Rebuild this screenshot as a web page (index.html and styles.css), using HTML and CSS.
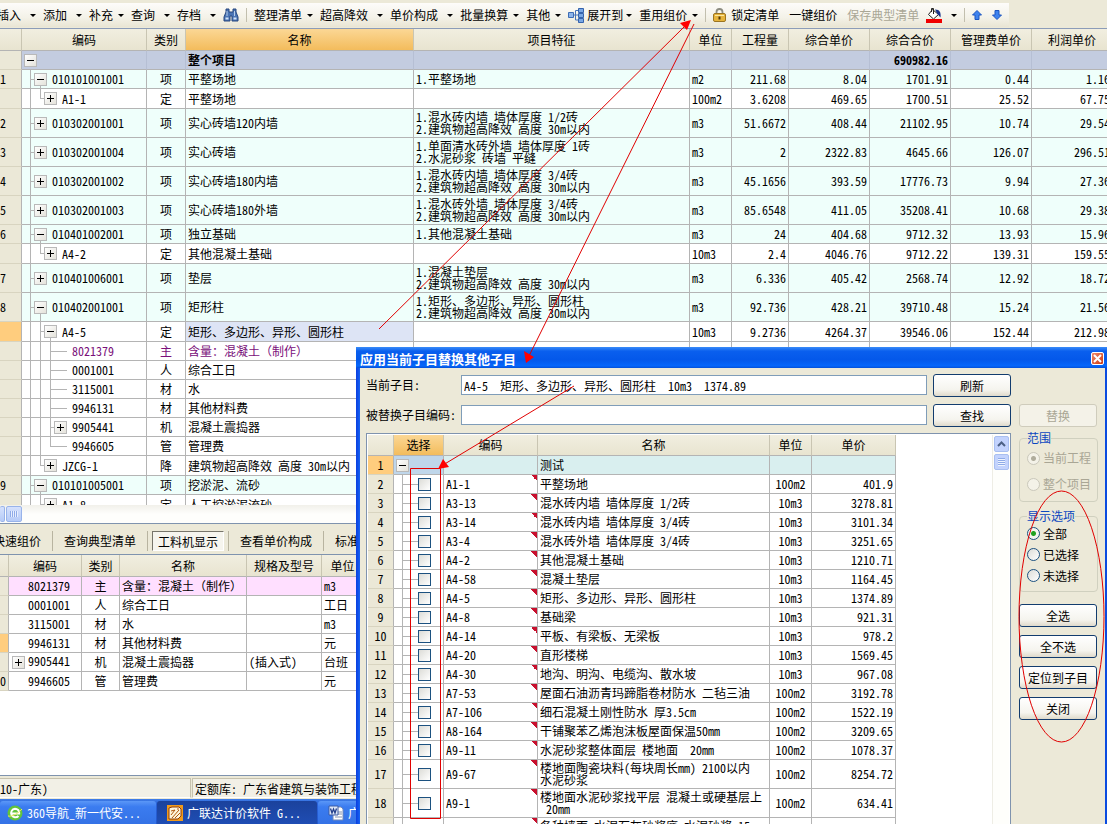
FILE: index.html
```html
<!DOCTYPE html>
<html lang="zh-CN">
<head>
<meta charset="utf-8">
<title>广联达计价软件</title>
<link rel="stylesheet" href="styles.css">
</head>
<body>
<main class="app">
  <nav class="toolbar">
    <div class="strip">
      <button class="tool wide">插入</button>
      <button class="tool wide">添加</button>
      <button class="tool">补充</button>
      <button class="tool wide">查询</button>
      <button class="tool wide">存档</button>
      <button class="plain" aria-label="查找"><svg width="16" height="16" viewBox="0 0 16 16"><path d="M3 2h3v3h4V2h3v3l2 5v4H9V9H7v5H1v-4l2-5z" fill="#4a74b4" stroke="#26477e"/><path d="M2.500 10.500h3v2h-3zM10.500 10.500h3v2h-3z" fill="#d3e4f8"/><path d="M4 4v5M11.500 4v5" stroke="#b5cdea"/></svg></button>
      <span class="sep"></span>
      <button class="tool">整理清单</button>
      <button class="tool wide">超高降效</button>
      <button class="tool wide">单价构成</button>
      <button class="tool">批量换算</button>
      <button class="tool">其他</button>
      <button class="tool icon"><svg width="16" height="15" viewBox="0 0 16 15"><path d="M5 7h5M7.500 7V2.500H10M7.500 7v5H10" fill="none" stroke="#4774b8"/><path d="M.5 4.500h5v5h-5z" fill="#8db4ea" stroke="#3d6cb4"/><path d="M10.500.5h5v4h-5zM10.500 5.500h5v4h-5zM10.500 10.500h5v4h-5z" fill="#79a7e4" stroke="#3563ad"/></svg>展开到</button>
      <button class="tool">重用组价</button>
      <span class="sep"></span>
      <button class="plain label"><svg width="13" height="14" viewBox="0 0 13 14"><path d="M3.500 7V4a3 3 0 0 1 6 0v3" fill="none" stroke="#8c8c80" stroke-width="1.800"/><rect x=".5" y="5.500" width="12" height="8" rx="1.500" fill="#e6b43c" stroke="#9b7420"/><path d="M2 7.500h9" stroke="#fbe7a0"/><path d="M6.500 8.500v3" stroke="#503808" stroke-width="2"/></svg>锁定清单</button>
      <button class="plain label">一键组价</button>
      <button class="plain" disabled>保存典型清单</button>
      <button class="tool wide" aria-label="填充颜色"><svg width="16" height="16" viewBox="0 0 16 16"><path d="M6.500 2.500l6 5-5 4.500-5-4.500z" fill="#fff" stroke="#222"/><path d="M5.500 5V1.500h2V7" fill="none" stroke="#222"/><path d="M9 2.500c5 0 6 3 5.500 8L11.500 7z" fill="#17338c"/><path d="M0 12h16v4H0z" fill="#f00000"/></svg></button>
      <span class="sep"></span>
      <button class="plain label" aria-label="上移"><svg width="10" height="10" viewBox="0 0 10 10"><path d="M5 .5L9.500 5H7v4.500H3V5H.5z" fill="#3f83ee" stroke="#1c55c0"/></svg></button>
      <button class="plain" aria-label="下移"><svg width="10" height="10" viewBox="0 0 10 10"><path d="M5 9.500L.5 5H3V.5h4V5h2.500z" fill="#3f83ee" stroke="#1c55c0"/></svg></button>
    </div>
  </nav>

  <section class="pane main-pane">
    <table class="grid main-grid">
      <colgroup><col class="w22"><col class="w125"><col class="w39"><col class="w228"><col class="w276"><col class="w42"><col class="w57"><col class="w81"><col class="w81"><col class="w81"><col class="w81"></colgroup>
      <thead><tr><th></th><th>编码</th><th>类别</th><th class="hot">名称</th><th>项目特征</th><th>单位</th><th>工程量</th><th>综合单价</th><th>综合合价</th><th>管理费单价</th><th>利润单价</th></tr></thead>
      <tbody>
        <tr class="total"><th></th><td class="code"><div class="tree"><span class="knot"><button class="tg minus" aria-label="折叠"></button></span></div></td><td></td><td>整个项目</td><td></td><td></td><td></td><td></td><td class="n">690982.16</td><td></td><td></td></tr>
        <tr class="item"><th>1</th><td class="code"><div class="tree"><i class="g t"></i><span class="knot open"><button class="tg minus" aria-label="折叠"></button></span>010101001001</div></td><td class="c">项</td><td>平整场地</td><td>1.平整场地</td><td>m2</td><td class="n">211.68</td><td class="n">8.04</td><td class="n">1701.91</td><td class="n">0.44</td><td class="n">1.16</td></tr>
        <tr class="mid"><th></th><td class="code"><div class="tree"><i class="g"></i><i class="g e"></i><span class="knot"><button class="tg plus" aria-label="展开"></button></span>A1-1</div></td><td class="c">定</td><td>平整场地</td><td></td><td>100m2</td><td class="n">3.6208</td><td class="n">469.65</td><td class="n">1700.51</td><td class="n">25.52</td><td class="n">67.75</td></tr>
        <tr class="item tall"><th>2</th><td class="code"><div class="tree"><i class="g t"></i><span class="knot"><button class="tg plus" aria-label="展开"></button></span>010302001001</div></td><td class="c">项</td><td>实心砖墙120内墙</td><td>1.混水砖内墙 墙体厚度 1/2砖<br>2.建筑物超高降效 高度 30m以内</td><td>m3</td><td class="n">51.6672</td><td class="n">408.44</td><td class="n">21102.95</td><td class="n">10.74</td><td class="n">29.54</td></tr>
        <tr class="item tall"><th>3</th><td class="code"><div class="tree"><i class="g t"></i><span class="knot"><button class="tg plus" aria-label="展开"></button></span>010302001004</div></td><td class="c">项</td><td>实心砖墙</td><td>1.单面清水砖外墙 墙体厚度 1砖<br>2.水泥砂浆 砖墙 平缝</td><td>m3</td><td class="n">2</td><td class="n">2322.83</td><td class="n">4645.66</td><td class="n">126.07</td><td class="n">296.51</td></tr>
        <tr class="item tall"><th>4</th><td class="code"><div class="tree"><i class="g t"></i><span class="knot"><button class="tg plus" aria-label="展开"></button></span>010302001002</div></td><td class="c">项</td><td>实心砖墙180内墙</td><td>1.混水砖内墙 墙体厚度 3/4砖<br>2.建筑物超高降效 高度 30m以内</td><td>m3</td><td class="n">45.1656</td><td class="n">393.59</td><td class="n">17776.73</td><td class="n">9.94</td><td class="n">27.36</td></tr>
        <tr class="item tall"><th>5</th><td class="code"><div class="tree"><i class="g t"></i><span class="knot"><button class="tg plus" aria-label="展开"></button></span>010302001003</div></td><td class="c">项</td><td>实心砖墙180外墙</td><td>1.混水砖外墙 墙体厚度 3/4砖<br>2.建筑物超高降效 高度 30m以内</td><td>m3</td><td class="n">85.6548</td><td class="n">411.05</td><td class="n">35208.41</td><td class="n">10.68</td><td class="n">29.38</td></tr>
        <tr class="item"><th>6</th><td class="code"><div class="tree"><i class="g t"></i><span class="knot open"><button class="tg minus" aria-label="折叠"></button></span>010401002001</div></td><td class="c">项</td><td>独立基础</td><td>1.其他混凝土基础</td><td>m3</td><td class="n">24</td><td class="n">404.68</td><td class="n">9712.32</td><td class="n">13.93</td><td class="n">15.96</td></tr>
        <tr class="mid"><th></th><td class="code"><div class="tree"><i class="g"></i><i class="g e"></i><span class="knot"><button class="tg plus" aria-label="展开"></button></span>A4-2</div></td><td class="c">定</td><td>其他混凝土基础</td><td></td><td>10m3</td><td class="n">2.4</td><td class="n">4046.76</td><td class="n">9712.22</td><td class="n">139.31</td><td class="n">159.55</td></tr>
        <tr class="item tall"><th>7</th><td class="code"><div class="tree"><i class="g t"></i><span class="knot"><button class="tg plus" aria-label="展开"></button></span>010401006001</div></td><td class="c">项</td><td>垫层</td><td>1.混凝土垫层<br>2.建筑物超高降效 高度 30m以内</td><td>m3</td><td class="n">6.336</td><td class="n">405.42</td><td class="n">2568.74</td><td class="n">12.92</td><td class="n">18.72</td></tr>
        <tr class="item tall"><th>8</th><td class="code"><div class="tree"><i class="g t"></i><span class="knot open"><button class="tg minus" aria-label="折叠"></button></span>010402001001</div></td><td class="c">项</td><td>矩形柱</td><td>1.矩形、多边形、异形、圆形柱<br>2.建筑物超高降效 高度 30m以内</td><td>m3</td><td class="n">92.736</td><td class="n">428.21</td><td class="n">39710.48</td><td class="n">15.24</td><td class="n">21.56</td></tr>
        <tr class="mid"><th class="hot"></th><td class="code"><div class="tree"><i class="g"></i><i class="g t"></i><span class="knot open"><button class="tg minus" aria-label="折叠"></button></span>A4-5</div></td><td class="c">定</td><td class="picked">矩形、多边形、异形、圆形柱</td><td></td><td>10m3</td><td class="n">9.2736</td><td class="n">4264.37</td><td class="n">39546.06</td><td class="n">152.44</td><td class="n">212.98</td></tr>
        <tr class="purple"><th></th><td class="code"><div class="tree"><i class="g"></i><i class="g"></i><i class="g t"></i><i class="dash"></i>8021379</div></td><td class="c">主</td><td class="full">含量：混凝土（制作）</td><td></td><td></td><td></td><td></td><td></td><td></td><td></td></tr>
        <tr><th></th><td class="code"><div class="tree"><i class="g"></i><i class="g"></i><i class="g t"></i><i class="dash"></i>0001001</div></td><td class="c">人</td><td>综合工日</td><td></td><td></td><td></td><td></td><td></td><td></td><td></td></tr>
        <tr><th></th><td class="code"><div class="tree"><i class="g"></i><i class="g"></i><i class="g t"></i><i class="dash"></i>3115001</div></td><td class="c">材</td><td>水</td><td></td><td></td><td></td><td></td><td></td><td></td><td></td></tr>
        <tr><th></th><td class="code"><div class="tree"><i class="g"></i><i class="g"></i><i class="g t"></i><i class="dash"></i>9946131</div></td><td class="c">材</td><td>其他材料费</td><td></td><td></td><td></td><td></td><td></td><td></td><td></td></tr>
        <tr><th></th><td class="code"><div class="tree"><i class="g"></i><i class="g"></i><i class="g t"></i><span class="knot"><button class="tg plus" aria-label="展开"></button></span>9905441</div></td><td class="c">机</td><td>混凝土震捣器</td><td></td><td></td><td></td><td></td><td></td><td></td><td></td></tr>
        <tr><th></th><td class="code"><div class="tree"><i class="g"></i><i class="g"></i><i class="g e"></i><i class="dash"></i>9946605</div></td><td class="c">管</td><td>管理费</td><td></td><td></td><td></td><td></td><td></td><td></td><td></td></tr>
        <tr class="mid"><th></th><td class="code"><div class="tree"><i class="g"></i><i class="g e"></i><span class="knot"><button class="tg plus" aria-label="展开"></button></span>JZCG-1</div></td><td class="c">降</td><td>建筑物超高降效 高度 30m以内</td><td></td><td></td><td></td><td></td><td></td><td></td><td></td></tr>
        <tr class="item"><th>9</th><td class="code"><div class="tree"><i class="g t"></i><span class="knot open"><button class="tg minus" aria-label="折叠"></button></span>010101005001</div></td><td class="c">项</td><td>挖淤泥、流砂</td><td></td><td></td><td></td><td></td><td></td><td></td><td></td></tr>
        <tr class="mid"><th></th><td class="code"><div class="tree"><i class="g"></i><i class="g e"></i><span class="knot"><button class="tg plus" aria-label="展开"></button></span>A1-8</div></td><td class="c">定</td><td>人工挖淤泥流砂</td><td></td><td></td><td></td><td></td><td></td><td></td><td></td></tr>
      </tbody>
    </table>
  </section>

  <div class="hscroll"><span class="cap"></span><span class="thumb"></span></div>

  <nav class="tabs">
    <button>快速组价</button><button>查询典型清单</button><button class="on"><span>工料机显示</span></button><button>查看单价构成</button><button>标准换算</button>
  </nav>

  <section class="pane sub-pane">
    <table class="grid sub-grid">
      <colgroup><col class="w9"><col class="w73"><col class="w38"><col class="w127"><col class="w75"><col class="w42"></colgroup>
      <thead><tr><th></th><th>编码</th><th>类别</th><th>名称</th><th>规格及型号</th><th>单位</th></tr></thead>
      <tbody>
        <tr class="pink"><th></th><td class="id">8021379</td><td class="c">主</td><td class="full">含量：混凝土（制作）</td><td></td><td>m3</td></tr>
        <tr><th></th><td class="id">0001001</td><td class="c">人</td><td>综合工日</td><td></td><td>工日</td></tr>
        <tr><th></th><td class="id">3115001</td><td class="c">材</td><td>水</td><td></td><td>m3</td></tr>
        <tr><th class="hot"></th><td class="id">9946131</td><td class="c">材</td><td>其他材料费</td><td></td><td>元</td></tr>
        <tr><th></th><td class="id has"><button class="tg plus" aria-label="展开"></button>9905441</td><td class="c">机</td><td>混凝土震捣器</td><td>(插入式)</td><td>台班</td></tr>
        <tr><th>0</th><td class="id">9946605</td><td class="c">管</td><td>管理费</td><td></td><td>元</td></tr>
      </tbody>
    </table>
  </section>

  <footer class="status"><span class="first">10-广东)</span><span>定额库: 广东省建筑与装饰工程综合定额(2010)</span></footer>

  <nav class="taskbar">
    <button><svg width="16" height="16" viewBox="0 0 16 16"><circle cx="8" cy="8" r="7.500" fill="#62c33c"/><path d="M4 8.500h8.200c.3-3-1.800-4.800-4.200-4.800A4.300 4.300 0 1 0 11.500 11" fill="none" stroke="#fff" stroke-width="2"/><path d="M1 11C5 12 12 8 15 4" stroke="#f7e96a" fill="none"/></svg>360导航_新一代安...</button>
    <button class="on"><svg width="16" height="16" viewBox="0 0 16 16"><path d="M0 0h16v16H0z" fill="#f09a1c"/><path d="M2 3l3-1h7l2 2v7l-3 3H2z" fill="#fff6dc" stroke="#8c3d0c"/><path d="M4 6l4-1-4 5M5 13l7-8M8 13l5-5M10 4h2" stroke="#b0580f" fill="none"/></svg>广联达计价软件 G...</button>
    <button><svg width="16" height="16" viewBox="0 0 16 16"><path d="M5 2h8l2 2v11H5z" fill="#fff" stroke="#7088b8"/><path d="M10 7h4M10 9h4M7 12h7" stroke="#8090b0"/><path d="M1 1h9v9H1z" fill="#dfe8f8" stroke="#3b5aa4"/><path d="M2.500 3.500L4 8l1.500-4L7 8l1.500-4.500" fill="none" stroke="#24408c" stroke-width="1.300"/></svg>广联达</button>
  </nav>

  <section class="dialog" role="dialog" aria-labelledby="dlg-title">
    <header class="titlebar"><h1 id="dlg-title">应用当前子目替换其他子目</h1><button class="close" aria-label="关闭窗口"><svg width="11" height="11" viewBox="0 0 11 11"><path d="M2 2l7 7M9 2l-7 7" stroke="#fff" stroke-width="2"/></svg></button></header>
    <div class="body">
      <div class="left">
        <div class="field"><label for="cur">当前子目:</label><input id="cur" type="text" value="A4-5  矩形、多边形、异形、圆形柱  10m3  1374.89"><button class="btn">刷新</button></div>
        <div class="field"><label for="rep">被替换子目编码:</label><input id="rep" type="text"><button class="btn">查找</button></div>
        <div class="list">
          <div class="list-view">
          <table class="grid pick-grid">
            <colgroup><col class="w26"><col class="w50"><col class="w94"><col class="w232"><col class="w42"><col class="w84"></colgroup>
            <thead><tr><th></th><th class="hot">选择</th><th>编码</th><th>名称</th><th>单位</th><th>单价</th></tr></thead>
            <tbody>
              <tr class="group"><th class="hot">1</th><td class="sel"><button class="tg minus" aria-label="折叠"></button></td><td></td><td>测试</td><td></td><td></td></tr>
              <tr><th>2</th><td class="chk"><input type="checkbox" aria-label="A1-1"></td><td class="mark">A1-1</td><td>平整场地</td><td class="c">100m2</td><td class="n">401.9</td></tr>
              <tr><th>3</th><td class="chk"><input type="checkbox" aria-label="A3-13"></td><td class="mark">A3-13</td><td>混水砖内墙 墙体厚度 1/2砖</td><td class="c">10m3</td><td class="n">3278.81</td></tr>
              <tr><th>4</th><td class="chk"><input type="checkbox" aria-label="A3-14"></td><td class="mark">A3-14</td><td>混水砖内墙 墙体厚度 3/4砖</td><td class="c">10m3</td><td class="n">3101.34</td></tr>
              <tr><th>5</th><td class="chk"><input type="checkbox" aria-label="A3-4"></td><td class="mark">A3-4</td><td>混水砖外墙 墙体厚度 3/4砖</td><td class="c">10m3</td><td class="n">3251.65</td></tr>
              <tr><th>6</th><td class="chk"><input type="checkbox" aria-label="A4-2"></td><td class="mark">A4-2</td><td>其他混凝土基础</td><td class="c">10m3</td><td class="n">1210.71</td></tr>
              <tr><th>7</th><td class="chk"><input type="checkbox" aria-label="A4-58"></td><td class="mark">A4-58</td><td>混凝土垫层</td><td class="c">10m3</td><td class="n">1164.45</td></tr>
              <tr><th>8</th><td class="chk"><input type="checkbox" aria-label="A4-5"></td><td class="mark">A4-5</td><td>矩形、多边形、异形、圆形柱</td><td class="c">10m3</td><td class="n">1374.89</td></tr>
              <tr><th>9</th><td class="chk"><input type="checkbox" aria-label="A4-8"></td><td class="mark">A4-8</td><td>基础梁</td><td class="c">10m3</td><td class="n">921.31</td></tr>
              <tr><th>10</th><td class="chk"><input type="checkbox" aria-label="A4-14"></td><td class="mark">A4-14</td><td>平板、有梁板、无梁板</td><td class="c">10m3</td><td class="n">978.2</td></tr>
              <tr><th>11</th><td class="chk"><input type="checkbox" aria-label="A4-20"></td><td class="mark">A4-20</td><td>直形楼梯</td><td class="c">10m3</td><td class="n">1569.45</td></tr>
              <tr><th>12</th><td class="chk"><input type="checkbox" aria-label="A4-30"></td><td class="mark">A4-30</td><td>地沟、明沟、电缆沟、散水坡</td><td class="c">10m3</td><td class="n">967.08</td></tr>
              <tr><th>13</th><td class="chk"><input type="checkbox" aria-label="A7-53"></td><td class="mark">A7-53</td><td>屋面石油沥青玛蹄脂卷材防水 二毡三油</td><td class="c">100m2</td><td class="n">3192.78</td></tr>
              <tr><th>14</th><td class="chk"><input type="checkbox" aria-label="A7-106"></td><td class="mark">A7-106</td><td>细石混凝土刚性防水 厚3.5cm</td><td class="c">100m2</td><td class="n">1522.19</td></tr>
              <tr><th>15</th><td class="chk"><input type="checkbox" aria-label="A8-164"></td><td class="mark">A8-164</td><td>干铺聚苯乙烯泡沫板屋面保温50mm</td><td class="c">100m2</td><td class="n">3209.65</td></tr>
              <tr><th>16</th><td class="chk"><input type="checkbox" aria-label="A9-11"></td><td class="mark">A9-11</td><td>水泥砂浆整体面层 楼地面&nbsp; 20mm</td><td class="c">100m2</td><td class="n">1078.37</td></tr>
              <tr class="tall"><th>17</th><td class="chk"><input type="checkbox" aria-label="A9-67"></td><td class="mark">A9-67</td><td>楼地面陶瓷块料(每块周长mm) 2100以内<br>水泥砂浆</td><td class="c">100m2</td><td class="n">8254.72</td></tr>
              <tr class="tall"><th>18</th><td class="chk"><input type="checkbox" aria-label="A9-1"></td><td class="mark">A9-1</td><td>楼地面水泥砂浆找平层 混凝土或硬基层上<br>&nbsp;20mm</td><td class="c">100m2</td><td class="n">634.41</td></tr>
              <tr class="tall"><th>19</th><td class="chk"><input type="checkbox" aria-label="A10-1"></td><td class="mark">A10-1</td><td>各种墙面 水泥石灰砂浆底 水泥砂浆 15<br>+5mm</td><td class="c">100m2</td><td class="n">1013.52</td></tr>
            </tbody>
          </table>
          </div>
          <div class="vscroll">
            <span class="arrow"><svg width="9" height="6" viewBox="0 0 9 6"><path d="M1 5l3.500-3.500L8 5" fill="none" stroke="#4d6185" stroke-width="2"/></svg></span>
            <span class="thumb"></span>
          </div>
        </div>
      </div>
      <aside class="side">
        <button class="btn" disabled>替换</button>
        <fieldset class="scope" disabled><legend>范围</legend>
          <label><input type="radio" name="scope" checked>当前工程</label>
          <label><input type="radio" name="scope">整个项目</label>
        </fieldset>
        <fieldset class="show"><legend>显示选项</legend>
          <label><input type="radio" name="show" checked>全部</label>
          <label><input type="radio" name="show">已选择</label>
          <label><input type="radio" name="show">未选择</label>
        </fieldset>
        <div class="actions">
          <button class="btn">全选</button>
          <button class="btn">全不选</button>
          <button class="btn">定位到子目</button>
          <button class="btn">关闭</button>
        </div>
      </aside>
    </div>
  </section>

  <svg class="notes" width="1107" height="824" viewBox="0 0 1107 824" aria-hidden="true">
    <g fill="none" stroke="#e00000">
      <path d="M379 329L686 25M694 24L529 356M574 386L443 465"/>
      <path d="M410.500 468.500h30v350h-30z"/>
      <ellipse cx="1061.500" cy="616.500" rx="42.500" ry="125.500"/>
    </g>
    <path d="M691 20l-11 3 7 7zM526 363l-2-12 10 6zM438 469l5-10 6 8z" fill="#f00"/>
  </svg>
</main>
</body>
</html>
```
FILE: styles.css
```css
* { box-sizing: border-box; }

html, body { margin: 0; height: 100%; }

body, button, input {
  font-family: "Noto Sans CJK SC", sans-serif;
  font-size: 12px;
  line-height: 12px;
  font-feature-settings: "hwid";
  color: #000;
}

body { overflow: hidden; background: #ece9d8; }

button { margin: 0; padding: 0; border: 0; background: none; white-space: nowrap; }

svg { display: block; flex: none; }

.app {
  position: relative;
  display: flex;
  flex-direction: column;
  height: 100vh;
  overflow: hidden;
}

/* toolbar */
.toolbar {
  flex: none;
  height: 29px;
  padding-top: 3px;
  border-bottom: 1px solid #8c9cb8;
  background: #ece9d8;
}

.strip {
  display: flex;
  align-items: center;
  gap: 7px;
  width: 1012px;
  height: 24px;
  margin-left: -3px;
  background: linear-gradient(#fdfcfa, #f4f2e8 60%, #e9e5d4);
}

.tool, .plain { display: flex; align-items: center; gap: 5px; flex: none; }
.tool::after {
  content: "";
  border: 3px solid transparent;
  border-top-color: #000;
  border-bottom: 0;
}
.tool.wide { gap: 9px; }
.tool.icon { gap: 3px; }
.plain.label { padding-right: 3px; }
.plain:disabled { color: #a9a695; }
.sep { width: 1px; height: 14px; background: #c2bfae; flex: none; }

/* grids */
.pane { min-height: 0; overflow: hidden; background: #fff; }
.main-pane { flex: 13 1 0; }
.sub-pane { flex: 6 1 0; border-bottom: 1px solid #7f93ae; }

.grid { table-layout: fixed; border-collapse: separate; border-spacing: 0; }
.main-grid { width: 100%; min-width: 1113px; }
.sub-grid { width: 364px; }
.pick-grid { width: 528px; }

.w9 { width: 9px; } .w22 { width: 22px; } .w26 { width: 26px; } .w38 { width: 38px; }
.w39 { width: 39px; } .w42 { width: 42px; } .w50 { width: 50px; } .w57 { width: 57px; }
.w73 { width: 73px; } .w75 { width: 75px; } .w81 { width: 81px; } .w84 { width: 84px; }
.w94 { width: 94px; } .w125 { width: 125px; } .w127 { width: 127px; }
.w228 { width: 228px; } .w232 { width: 232px; } .w276 { width: 276px; }

.grid tr { height: 19px; background: #fff; }
.grid thead tr { height: 22px; }
.pick-grid thead tr { height: 21px; }
.grid .mid { height: 20px; }
.grid .tall { height: 29px; }

.grid th, .grid td {
  height: inherit;
  padding: 0 2px;
  border-right: 1px solid #b4b4b4;
  border-bottom: 1px solid #b4b4b4;
  overflow: hidden;
  white-space: nowrap;
  text-align: left;
  font-weight: normal;
}
.grid thead th {
  padding: 0;
  text-align: center;
  background: linear-gradient(#f1eee0, #e8e4d0);
  border-right-color: #c9c5b2;
}
.grid tbody th {
  padding: 0;
  background: #ebe8d7;
  border-bottom-color: #d8d4c0;
}
.grid thead .hot { background: linear-gradient(#fbd795, #f3bc5c); }
.grid tbody .hot { background: #ffcd7e; }
.grid .c { padding: 0; text-align: center; }
.grid .n { padding-right: 2px; text-align: right; }
.grid .full { font-feature-settings: normal; }

.grid .item { background: #effffb; }
.grid .total { background: #c3cce0; }
.total td { font-weight: bold; border-right-color: #b6bfd4; }
.purple td { color: #7a0f7a; }
.grid .pink { background: #ffdfff; }
.grid .picked { background: #dde4f5; }

/* tree column */
.grid .code { padding: 0 0 0 8px; }
.tree { display: flex; align-items: center; height: 100%; }
.g {
  flex: none;
  align-self: stretch;
  width: 10px;
  background: linear-gradient(#b4b4b4, #b4b4b4) 0 0 / 1px 100% no-repeat;
}
.g.t {
  background:
    linear-gradient(#b4b4b4, #b4b4b4) 0 0 / 1px 100% no-repeat,
    linear-gradient(#b4b4b4, #b4b4b4) 0 50% / 100% 1px no-repeat;
}
.g.e {
  background:
    linear-gradient(#b4b4b4, #b4b4b4) 0 0 / 1px 50% no-repeat,
    linear-gradient(#b4b4b4, #b4b4b4) 0 50% / 100% 1px no-repeat;
}
.dash { flex: none; width: 7px; height: 1px; margin-right: 5px; background: #b4b4b4; }
.knot {
  flex: none;
  display: flex;
  align-items: center;
  align-self: stretch;
  width: 13px;
  margin: 0 5px 0 -6px;
}
.knot.open { background: linear-gradient(#b4b4b4, #b4b4b4) 6px 100% / 1px 50% no-repeat; }
.tg {
  display: block;
  width: 13px;
  height: 13px;
  border: 1px solid #b9b9b9;
  background:
    linear-gradient(#000, #000) 50% 50% / 7px 1px no-repeat,
    linear-gradient(135deg, #fff, #e4e2da);
}
.tg.plus {
  background:
    linear-gradient(#000, #000) 50% 50% / 7px 1px no-repeat,
    linear-gradient(#000, #000) 50% 50% / 1px 7px no-repeat,
    linear-gradient(135deg, #fff, #e4e2da);
}

/* horizontal scrollbar */
.hscroll {
  flex: none;
  display: flex;
  gap: 1px;
  height: 18px;
  padding: 1px 0;
  background: linear-gradient(#f1f0ea, #fefefc 50%);
}
.hscroll span {
  border: 1px solid #98b3ea;
  border-radius: 2px;
  background: linear-gradient(#d5e1fd, #b6cbf7);
}
.hscroll .cap { width: 5px; border-left: 0; }
.hscroll .thumb {
  width: 16px;
  background:
    repeating-linear-gradient(90deg, #8fabe8 0 1px, #e8effe 1px 2px) 50% 50% / 8px 6px no-repeat,
    linear-gradient(#d5e1fd, #b6cbf7);
}

/* tabs */
.tabs {
  flex: none;
  display: flex;
  align-items: center;
  height: 32px;
  padding-top: 4px;
  border-top: 1px solid #7f93ae;
  border-bottom: 1px solid #7f93ae;
  background: #ece9d8;
}
.tabs button {
  flex: none;
  height: 20px;
  padding: 0 11px;
  border-right: 1px solid #b8b4a0;
}
.tabs button:first-child { margin-left: -18px; }
.tabs .on { padding: 0 4px; }
.tabs .on span {
  display: block;
  padding: 4px 5px 2px;
  border: 1px solid;
  border-color: #77756a #fff #fff #77756a;
  background: #f6f5ee;
}

.grid .id { padding-left: 19px; }
.grid .id.has { padding-left: 3px; }
.has .tg { display: inline-block; margin-right: 3px; vertical-align: middle; }

/* status bar and task bar */
.status {
  flex: none;
  display: flex;
  gap: 1px;
  height: 23px;
  padding: 2px 0 1px;
  background: #ece9d8;
}
.status span {
  flex: 1;
  padding: 4px 2px;
  border: 1px solid #c6c2ae;
  border-bottom-color: #fff;
  background: #f2f0e6;
  white-space: nowrap;
}
.status .first { flex: 0 0 191px; padding-left: 0; border-left: 0; }

.taskbar {
  flex: none;
  display: flex;
  gap: 1px;
  height: 25px;
  padding-top: 2px;
  background: linear-gradient(#3f7ee8, #2a62d8 20%, #2258cc);
}
.taskbar button {
  display: flex;
  align-items: center;
  gap: 4px;
  width: 160px;
  padding-left: 10px;
  border-radius: 3px 3px 0 0;
  background: linear-gradient(#5b97f7, #3b7cf0 25%, #3472e6);
  color: #fff;
}
.taskbar button:first-child { width: 156px; padding-left: 7px; }
.taskbar .on { background: linear-gradient(#1b429c, #1f4db4); }

/* dialog */
.dialog {
  position: absolute;
  left: 356px;
  right: 0;
  top: 347px;
  bottom: 0;
  display: flex;
  flex-direction: column;
  padding: 0 2px 0 4px;
  background: linear-gradient(90deg, #0a3ee0, #1663f2 4px, #0a4be0);
  overflow: hidden;
}
.titlebar {
  flex: none;
  display: flex;
  align-items: center;
  justify-content: space-between;
  height: 21px;
  margin: 0 -2px 0 -4px;
  padding: 2px 3px 0 4px;
  background: linear-gradient(#3a8bf8, #0a5fee 20%, #0458ea 60%, #0667fb 90%, #0350d8);
}
.titlebar h1 { margin: 0; font-size: 13px; line-height: 16px; font-weight: bold; color: #fff; }
.close {
  display: grid;
  place-items: center;
  width: 13px;
  height: 13px;
  border: 1px solid #fff;
  border-radius: 2px;
  background: linear-gradient(135deg, #ee8a6c, #cf3a12);
}

.body {
  flex: 1;
  display: flex;
  gap: 8px;
  min-height: 0;
  padding: 5px 7px 0 6px;
  background: #ece9d8;
}
.left { flex: 1; display: flex; flex-direction: column; gap: 6px; min-width: 0; }
.field { flex: none; display: flex; align-items: center; gap: 6px; height: 24px; }
.field label { flex: none; width: 89px; white-space: nowrap; }
.field input {
  flex: 1;
  min-width: 0;
  height: 20px;
  padding: 0 2px;
  border: 1px solid #7f9db9;
  background: #fff;
}
.btn {
  flex: none;
  width: 78px;
  height: 23px;
  border: 1px solid #123c6e;
  border-radius: 3px;
  background: linear-gradient(#fff, #f5f4ee 70%, #dfdacb);
}
.btn:disabled { color: #a9a695; border-color: #cfccbc; background: #f4f2e8; }
.field .btn { align-self: flex-end; }

.list {
  flex: 1;
  display: flex;
  min-height: 0;
  padding: 1px 1px 0;
  border: 1px solid #7f93ae;
  border-bottom: 0;
  background: #fff;
}
.list-view { flex: 1; min-width: 0; overflow: hidden; }
.pick-grid tbody th { text-align: center; }
.grid .group { background: #d9efef; }
.group .sel { background: #bfd6ea; }
.grid .mark {
  background: linear-gradient(to top right, transparent 50%, #c8102e 50%) 100% 0 / 6px 6px no-repeat;
}
.grid .chk {
  padding: 0 0 0 24px;
  background:
    linear-gradient(#b4b4b4, #b4b4b4) 8px 0 / 1px 100% no-repeat,
    linear-gradient(#b4b4b4, #b4b4b4) 8px 50% / 16px 1px no-repeat;
}
.chk input {
  appearance: none;
  display: block;
  width: 13px;
  height: 13px;
  margin: 0;
  border: 1px solid #1c5180;
  background: linear-gradient(135deg, #dcdcd7, #fff);
}

.vscroll {
  flex: none;
  display: flex;
  flex-direction: column;
  align-items: center;
  gap: 2px;
  width: 17px;
  padding-top: 1px;
  border-left: 1px solid #eeede5;
  background: #fefefb;
}
.vscroll span {
  display: grid;
  place-items: center;
  width: 15px;
  height: 16px;
  border: 1px solid #a9bff0;
  border-radius: 2px;
  background: #c3d3fd;
}
.vscroll .thumb {
  background:
    repeating-linear-gradient(#8fabe8 0 1px, #eef4fe 1px 2px) 50% 50% / 7px 8px no-repeat,
    #c3d3fd;
}

.side { flex: none; display: flex; flex-direction: column; width: 79px; padding-top: 31px; }
fieldset {
  min-width: 0;
  margin: 0;
  padding: 0 0 0 7px;
  border: 1px solid #d0d0bf;
  border-radius: 4px;
}
legend { padding: 0; line-height: 14px; color: #0b47c0; }
fieldset label { display: flex; align-items: center; gap: 3px; white-space: nowrap; }
fieldset input {
  appearance: none;
  flex: none;
  width: 13px;
  height: 13px;
  margin: 0;
  border: 1px solid #1c5180;
  border-radius: 50%;
  background: linear-gradient(135deg, #dcdcd7, #fff);
}
fieldset input:checked { background: radial-gradient(circle, #21a121 0 2px, #f4f4f0 3px); }
fieldset:disabled label { color: #a9a695; }
fieldset:disabled input { border-color: #cac8bb; background: #f4f2e8; }
fieldset:disabled input:checked { background: radial-gradient(circle, #b0ad9c 0 2px, #f4f2e8 3px); }
.scope { margin-top: 4px; padding-bottom: 4px; }
.scope label { height: 26px; }
.show { margin-top: 7px; padding-bottom: 5px; }
.show label { height: 21px; }
.actions { display: flex; flex-direction: column; gap: 8px; margin-top: 12px; }

/* hand-drawn marks over the windows */
.notes { position: absolute; left: 0; top: 0; pointer-events: none; }
```
